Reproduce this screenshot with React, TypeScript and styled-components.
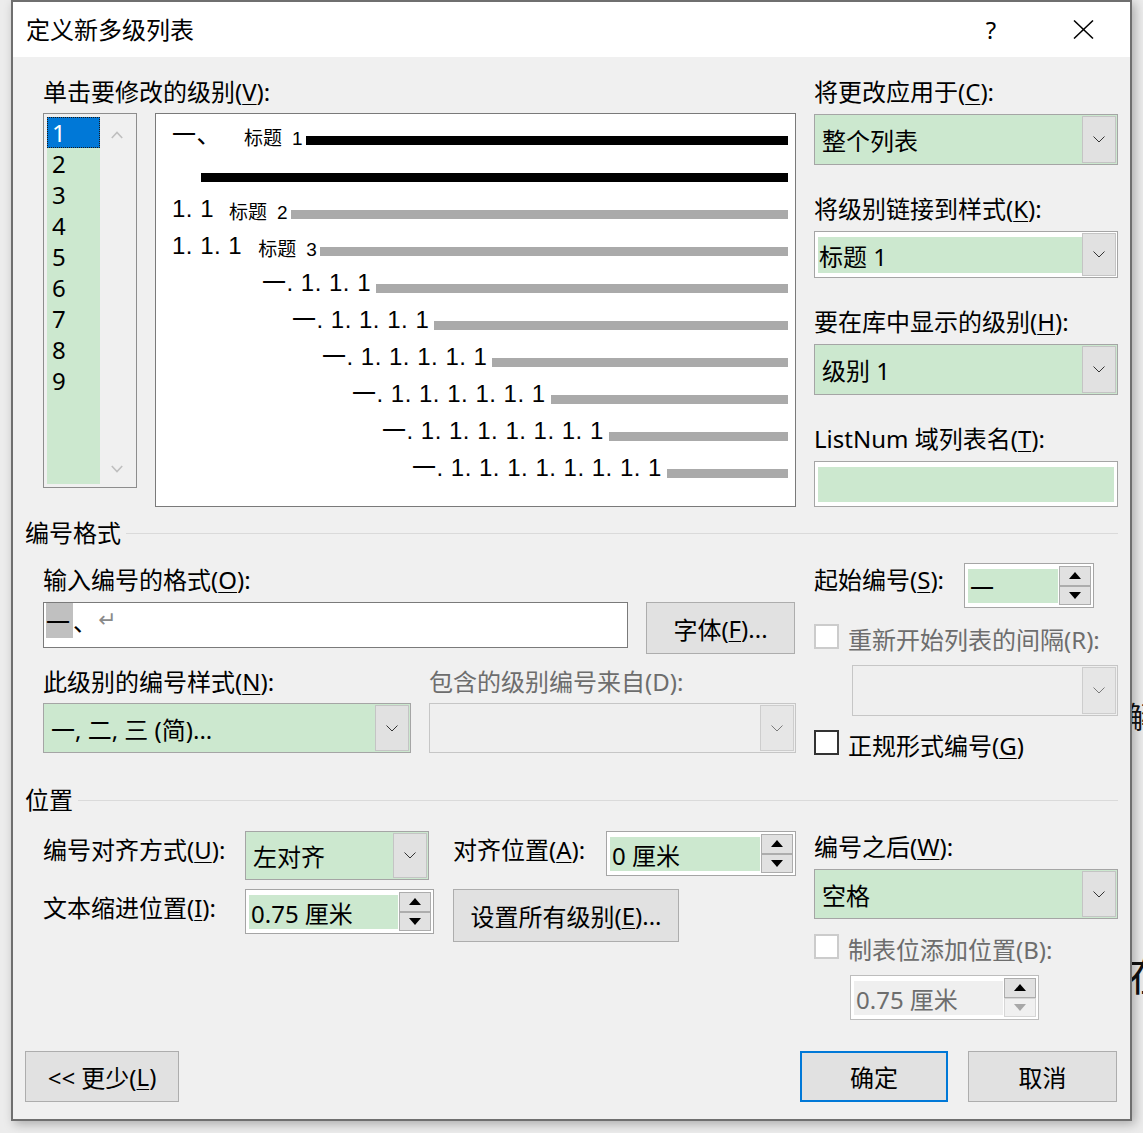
import React from 'react';
import styled, { createGlobalStyle } from 'styled-components';

const GREEN = '#cce8cf';
const UI_FONT = `"Noto Sans", "Noto Sans CJK SC", sans-serif`;

const Global = createGlobalStyle`
  html, body { margin: 0; padding: 0; }
  body {
    background: #ececec;
    font-family: ${UI_FONT};
    color: #000;
    overflow: hidden;
  }
`;

const Stage = styled.div`
  position: relative;
  width: 1143px;
  height: 1133px;
  box-sizing: border-box;
  padding-left: 11px;
  overflow: hidden;
  background: #ececec;
`;

const BackdropGlyph = styled.span<{ $x: number; $y: number; $size: number }>`
  position: absolute;
  left: ${(p) => p.$x}px;
  top: ${(p) => p.$y}px;
  font-size: ${(p) => p.$size}px;
  line-height: 1;
  font-family: "Noto Sans CJK SC", sans-serif;
  color: #111;
`;

const Dialog = styled.div`
  position: relative;
  z-index: 1;
  width: 1121px;
  height: 1121px;
  box-sizing: border-box;
  border: 2px solid #6f6f6f;
  background: #f0f0f0;
  display: flex;
  flex-direction: column;
  box-shadow: 3px 3px 10px rgba(0, 0, 0, 0.28);
`;

const TitleBar = styled.div`
  height: 55px;
  flex: none;
  background: #fff;
  display: flex;
  align-items: center;
  padding: 0 24px 0 13px;
`;

const TitleText = styled.div`
  flex: 1;
  font-size: 24px;
  line-height: 32px;
  margin-top: -2px;
  font-family: "Noto Sans CJK SC", sans-serif;
`;

const TitleBtn = styled.div<{ $ml?: number }>`
  width: 46px;
  height: 55px;
  margin-left: ${(p) => p.$ml ?? 0}px;
  display: flex;
  align-items: center;
  justify-content: center;
  font-size: 24px;
  font-family: "Noto Sans", sans-serif;
`;

const Body = styled.div`
  flex: 1;
  display: flex;
  flex-direction: column;
  padding: 19px 12px 17px 12px;
`;

const Label = styled.div<{ $disabled?: boolean; $w?: number; $mt?: number; $ml?: number }>`
  font-size: 24px;
  line-height: 32px;
  white-space: nowrap;
  color: ${(p) => (p.$disabled ? '#6d6d6d' : '#000')};
  ${(p) => (p.$w ? `width: ${p.$w}px; flex: none;` : '')}
  margin-top: ${(p) => p.$mt ?? 0}px;
  margin-left: ${(p) => p.$ml ?? 0}px;
`;

const Acc = styled.span`
  text-decoration: underline;
  text-decoration-thickness: 1px;
  text-underline-offset: 3px;
`;

const TopSection = styled.div`
  display: flex;
  gap: 18px;
  padding-left: 18px;
`;

const LeftTop = styled.div`
  width: 753px;
  display: flex;
  flex-direction: column;
  gap: 5px;
`;

const ListRow = styled.div`
  display: flex;
  gap: 18px;
  align-items: flex-start;
`;

const ListBox = styled.div`
  width: 94px;
  height: 375px;
  box-sizing: border-box;
  border: 1px solid #8d8d8d;
  padding: 3px;
  display: flex;
  background: #f0f0f0;
`;

const ItemsCol = styled.div`
  width: 53px;
  background: ${GREEN};
  display: flex;
  flex-direction: column;
`;

const ListItem = styled.div<{ $sel?: boolean }>`
  height: 31px;
  line-height: 31px;
  padding-left: 5px;
  font-size: 24px;
  background: ${(p) => (p.$sel ? '#0078d7' : 'transparent')};
  color: ${(p) => (p.$sel ? '#fff' : '#000')};
  ${(p) => (p.$sel ? 'outline: 1px dotted #1a1a1a; outline-offset: -1px;' : '')}
`;

const ScrollCol = styled.div`
  flex: 1;
  display: flex;
  flex-direction: column;
  justify-content: space-between;
  align-items: center;
  padding: 14px 0 11px;
`;

const Preview = styled.div`
  width: 641px;
  height: 394px;
  box-sizing: border-box;
  border: 1px solid #7a7a7a;
  background: #fff;
  padding: 5px 7px 0 16px;
  display: flex;
  flex-direction: column;
`;

const PreviewRow = styled.div<{ $indent: number }>`
  display: flex;
  align-items: flex-start;
  height: 37px;
  padding-left: ${(p) => p.$indent}px;
`;

const PNum = styled.span`
  font-family: "Liberation Sans", "Noto Sans CJK SC", sans-serif;
  font-size: 24px;
  line-height: 31px;
  white-space: pre;
  letter-spacing: 0.5px;
`;

const PHead = styled.span<{ $gap: number }>`
  margin-left: ${(p) => p.$gap}px;
  margin-top: 2px;
  font-family: "Noto Sans CJK SC", sans-serif;
  font-size: 19px;
  line-height: 31px;
  white-space: nowrap;
`;

const PHeadNum = styled.span`
  margin-left: 10px;
  font-family: "Liberation Sans", sans-serif;
`;

const PBar = styled.div<{ $dark: boolean; $ml: number }>`
  flex: 1;
  height: 9px;
  margin-top: 17px;
  margin-left: ${(p) => p.$ml}px;
  background: ${(p) => (p.$dark ? '#000' : '#aaaaaa')};
`;

const RightCol = styled.div`
  width: 304px;
  display: flex;
  flex-direction: column;
  gap: 28px;
`;

const Field = styled.div`
  display: flex;
  flex-direction: column;
  gap: 6px;
`;

type ComboVariant = 'green' | 'edit' | 'disabled';

const ComboBox = styled.div<{ $w: number; $h: number; $v: ComboVariant; $ml?: number }>`
  width: ${(p) => p.$w}px;
  height: ${(p) => p.$h}px;
  flex: none;
  box-sizing: border-box;
  margin-left: ${(p) => p.$ml ?? 0}px;
  display: flex;
  padding: 1px;
  border: 1px solid ${(p) => (p.$v === 'disabled' ? '#c6c6c6' : '#a5a5a5')};
  background: ${(p) => (p.$v === 'green' ? GREEN : p.$v === 'edit' ? '#fff' : '#efefef')};
`;

const ComboValue = styled.div<{ $v: ComboVariant }>`
  flex: 1;
  display: flex;
  align-items: center;
  font-size: 24px;
  white-space: nowrap;
  padding-left: ${(p) => (p.$v === 'edit' ? 1 : 6)}px;
  ${(p) => (p.$v === 'edit' ? `background: ${GREEN}; margin: 4px 0 3px 2px;` : '')}
`;

const DropBtn = styled.div<{ $disabled?: boolean }>`
  width: 34px;
  flex: none;
  box-sizing: border-box;
  border: 1px solid ${(p) => (p.$disabled ? '#cdcdcd' : '#c4c4c4')};
  background: ${(p) => (p.$disabled ? '#e6e6e6' : '#e1e1e1')};
  display: flex;
  align-items: center;
  justify-content: center;
`;

const TextField = styled.div`
  width: 304px;
  height: 46px;
  box-sizing: border-box;
  border: 1px solid #a5a5a5;
  background: #fff;
  padding: 5px 3px 4px 3px;
  display: flex;
`;

const GreenFill = styled.div`
  flex: 1;
  background: ${GREEN};
`;

const SectionHead = styled.div<{ $mt: number }>`
  display: flex;
  align-items: center;
  gap: 5px;
  margin-top: ${(p) => p.$mt}px;
  font-size: 24px;
  line-height: 32px;
`;

const Rule = styled.div`
  flex: 1;
  height: 1px;
  background: #dadada;
`;

const Section = styled.div<{ $mt: number }>`
  display: flex;
  align-items: flex-start;
  gap: 18px;
  padding-left: 18px;
  margin-top: ${(p) => p.$mt}px;
`;

const Column = styled.div<{ $w: number; $pt?: number; $gap?: number }>`
  width: ${(p) => p.$w}px;
  flex: none;
  display: flex;
  flex-direction: column;
  padding-top: ${(p) => p.$pt ?? 0}px;
  gap: ${(p) => p.$gap ?? 0}px;
`;

const Row = styled.div<{ $mt?: number; $gap?: number }>`
  display: flex;
  align-items: flex-start;
  margin-top: ${(p) => p.$mt ?? 0}px;
  gap: ${(p) => p.$gap ?? 0}px;
`;

const FormatInput = styled.div`
  width: 585px;
  height: 46px;
  flex: none;
  box-sizing: border-box;
  border: 1px solid #7a7a7a;
  background: #fff;
  padding: 0 0 0 2px;
  display: flex;
  align-items: flex-start;
  font-family: "Noto Sans CJK SC", sans-serif;
  font-size: 24px;
  line-height: 35px;
`;

const SelChar = styled.span`
  width: 27px;
  height: 35px;
  background: #c0c0c0;
`;

const RetMark = styled.span`
  margin-left: 1px;
  font-family: "DejaVu Sans", sans-serif;
  font-size: 22px;
  color: #8a8a8a;
  line-height: 33px;
`;

const Button = styled.div<{ $w: number; $h: number; $default?: boolean; $ml?: number }>`
  width: ${(p) => p.$w}px;
  height: ${(p) => p.$h}px;
  flex: none;
  margin-left: ${(p) => p.$ml ?? 0}px;
  box-sizing: border-box;
  background: #e1e1e1;
  border: ${(p) => (p.$default ? '2px solid #0078d7' : '1px solid #adadad')};
  display: flex;
  align-items: center;
  justify-content: center;
  font-size: 24px;
  white-space: nowrap;
`;

const Spinner = styled.div<{ $w: number; $h: number; $ml?: number; $disabled?: boolean }>`
  width: ${(p) => p.$w}px;
  height: ${(p) => p.$h}px;
  flex: none;
  margin-left: ${(p) => p.$ml ?? 0}px;
  box-sizing: border-box;
  border: 1px solid ${(p) => (p.$disabled ? '#bdbdbd' : '#a5a5a5')};
  background: #fff;
  padding: 2px;
  display: flex;
`;

const SpinValue = styled.div<{ $disabled?: boolean }>`
  flex: 1;
  margin: 3px 1px 2px 1px;
  padding-left: 2px;
  background: ${(p) => (p.$disabled ? '#efefef' : GREEN)};
  color: ${(p) => (p.$disabled ? '#6d6d6d' : '#000')};
  display: flex;
  align-items: center;
  font-size: 24px;
  white-space: nowrap;
`;

const SpinCol = styled.div`
  width: 32px;
  flex: none;
  display: flex;
  flex-direction: column;
`;

const SpinBtn = styled.div<{ $faded?: boolean }>`
  flex: 1;
  box-sizing: border-box;
  border: 1px solid ${(p) => (p.$faded ? '#d6d6d6' : '#adadad')};
  background: ${(p) => (p.$faded ? '#f0f0f0' : '#e1e1e1')};
  display: flex;
  align-items: center;
  justify-content: center;
`;

const CheckRow = styled.div<{ $mt: number }>`
  display: flex;
  align-items: flex-start;
  gap: 9px;
  margin-top: ${(p) => p.$mt}px;
`;

const CheckBox = styled.div<{ $disabled?: boolean }>`
  width: 25px;
  height: 25px;
  flex: none;
  box-sizing: border-box;
  background: #fff;
  border: 2px solid ${(p) => (p.$disabled ? '#cccccc' : '#333333')};
`;

const Footer = styled.div`
  margin-top: auto;
  display: flex;
  justify-content: space-between;
  align-items: flex-start;
`;

const FooterRight = styled.div`
  display: flex;
  gap: 20px;
  margin-right: 1px;
`;

const Chevron = ({ color = '#333' }: { color?: string }) => (
  <svg width="12" height="7" viewBox="0 0 12 7">
    <polyline points="0.5,0.5 6,6 11.5,0.5" fill="none" stroke={color} strokeWidth="1" />
  </svg>
);

const ScrollArrow = ({ up }: { up?: boolean }) => (
  <svg width="12" height="8" viewBox="0 0 12 8">
    <polyline
      points={up ? '0.8,7 6,1.5 11.2,7' : '0.8,1 6,6.5 11.2,1'}
      fill="none"
      stroke="#bfbfbf"
      strokeWidth="1.6"
    />
  </svg>
);

const Tri = ({ up, color = '#000' }: { up?: boolean; color?: string }) => (
  <svg width="12" height="7" viewBox="0 0 12 7">
    <polygon points={up ? '0,7 6,0 12,7' : '0,0 6,7 12,0'} fill={color} />
  </svg>
);

const CloseIcon = () => (
  <svg width="21" height="19" viewBox="0 0 21 19">
    <line x1="1" y1="0.5" x2="20" y2="18.5" stroke="#000" strokeWidth="1.5" />
    <line x1="20" y1="0.5" x2="1" y2="18.5" stroke="#000" strokeWidth="1.5" />
  </svg>
);

const Combo = ({
  w,
  h,
  v,
  ml,
  children,
}: {
  w: number;
  h: number;
  v: ComboVariant;
  ml?: number;
  children?: React.ReactNode;
}) => (
  <ComboBox $w={w} $h={h} $v={v} $ml={ml}>
    <ComboValue $v={v}>{children}</ComboValue>
    <DropBtn $disabled={v === 'disabled'}>
      <Chevron color={v === 'disabled' ? '#7a7a7a' : '#333'} />
    </DropBtn>
  </ComboBox>
);

const Spin = ({
  w,
  h,
  ml,
  disabled,
  children,
}: {
  w: number;
  h: number;
  ml?: number;
  disabled?: boolean;
  children: React.ReactNode;
}) => (
  <Spinner $w={w} $h={h} $ml={ml} $disabled={disabled}>
    <SpinValue $disabled={disabled}>{children}</SpinValue>
    <SpinCol>
      <SpinBtn $faded={false}>
        <Tri up />
      </SpinBtn>
      <SpinBtn $faded={disabled}>
        <Tri color={disabled ? '#a8a8a8' : '#000'} />
      </SpinBtn>
    </SpinCol>
  </Spinner>
);

type PRow = { indent: number; num: string; head?: string; headNum?: string; gap?: number; dark?: boolean; barMl: number };

const previewRows: PRow[] = [
  { indent: 0, num: '一、', head: '标题', headNum: '1', gap: 23, dark: true, barMl: 3 },
  { indent: 29, num: '', dark: true, barMl: 0 },
  { indent: 0, num: '1. 1', head: '标题', headNum: '2', gap: 15, barMl: 3 },
  { indent: 0, num: '1. 1. 1', head: '标题', headNum: '3', gap: 16, barMl: 3 },
  { indent: 90, num: '一. 1. 1. 1', barMl: 5 },
  { indent: 120, num: '一. 1. 1. 1. 1', barMl: 5 },
  { indent: 150, num: '一. 1. 1. 1. 1. 1', barMl: 5 },
  { indent: 180, num: '一. 1. 1. 1. 1. 1. 1', barMl: 5 },
  { indent: 210, num: '一. 1. 1. 1. 1. 1. 1. 1', barMl: 5 },
  { indent: 240, num: '一. 1. 1. 1. 1. 1. 1. 1. 1', barMl: 5 },
];

export default function App() {
  return (
    <>
      <Global />
      <Stage>
        <BackdropGlyph $x={1127} $y={700} $size={30}>解</BackdropGlyph>
        <BackdropGlyph $x={1128} $y={952} $size={42}>在</BackdropGlyph>
        <Dialog>
          <TitleBar>
            <TitleText>定义新多级列表</TitleText>
            <TitleBtn>?</TitleBtn>
            <TitleBtn $ml={46}>
              <CloseIcon />
            </TitleBtn>
          </TitleBar>
          <Body>
            <TopSection>
              <LeftTop>
                <Label>
                  单击要修改的级别(<Acc>V</Acc>):
                </Label>
                <ListRow>
                  <ListBox>
                    <ItemsCol>
                      {[1, 2, 3, 4, 5, 6, 7, 8, 9].map((n) => (
                        <ListItem key={n} $sel={n === 1}>
                          {n}
                        </ListItem>
                      ))}
                    </ItemsCol>
                    <ScrollCol>
                      <ScrollArrow up />
                      <ScrollArrow />
                    </ScrollCol>
                  </ListBox>
                  <Preview>
                    {previewRows.map((r, i) => (
                      <PreviewRow key={i} $indent={r.indent}>
                        {r.num && <PNum>{r.num}</PNum>}
                        {r.head && (
                          <PHead $gap={r.gap ?? 0}>
                            {r.head}
                            <PHeadNum>{r.headNum}</PHeadNum>
                          </PHead>
                        )}
                        <PBar $dark={!!r.dark} $ml={r.barMl} />
                      </PreviewRow>
                    ))}
                  </Preview>
                </ListRow>
              </LeftTop>
              <RightCol>
                <Field>
                  <Label>
                    将更改应用于(<Acc>C</Acc>):
                  </Label>
                  <Combo w={304} h={51} v="green">
                    整个列表
                  </Combo>
                </Field>
                <Field>
                  <Label>
                    将级别链接到样式(<Acc>K</Acc>):
                  </Label>
                  <Combo w={304} h={47} v="edit">
                    标题 1
                  </Combo>
                </Field>
                <Field>
                  <Label>
                    要在库中显示的级别(<Acc>H</Acc>):
                  </Label>
                  <Combo w={304} h={51} v="green">
                    级别 1
                  </Combo>
                </Field>
                <Field>
                  <Label>
                    ListNum 域列表名(<Acc>T</Acc>):
                  </Label>
                  <TextField>
                    <GreenFill />
                  </TextField>
                </Field>
              </RightCol>
            </TopSection>

            <SectionHead $mt={10}>
              编号格式
              <Rule />
            </SectionHead>

            <Section $mt={14}>
              <Column $w={753} $pt={1}>
                <Label>
                  输入编号的格式(<Acc>O</Acc>):
                </Label>
                <Row $mt={6} $gap={18}>
                  <FormatInput>
                    <SelChar>一</SelChar>
                    <span>、</span>
                    <RetMark>↵</RetMark>
                  </FormatInput>
                  <Button $w={149} $h={52}>
                    字体(<Acc>F</Acc>)...
                  </Button>
                </Row>
                <Row $mt={12} $gap={18}>
                  <Column $w={368} $gap={5}>
                    <Label>
                      此级别的编号样式(<Acc>N</Acc>):
                    </Label>
                    <Combo w={368} h={50} v="green">
                      一, 二, 三 (简)...
                    </Combo>
                  </Column>
                  <Column $w={367} $gap={5}>
                    <Label $disabled>包含的级别编号来自(D):</Label>
                    <Combo w={367} h={50} v="disabled" />
                  </Column>
                </Row>
              </Column>
              <Column $w={304}>
                <Row>
                  <Label $w={150} $mt={1}>
                    起始编号(<Acc>S</Acc>):
                  </Label>
                  <Spin w={130} h={45}>
                    一
                  </Spin>
                </Row>
                <CheckRow $mt={16}>
                  <CheckBox $disabled />
                  <Label $disabled>重新开始列表的间隔(R):</Label>
                </CheckRow>
                <Row $mt={9}>
                  <Combo w={266} h={51} v="disabled" ml={38} />
                </Row>
                <CheckRow $mt={14}>
                  <CheckBox />
                  <Label>
                    正规形式编号(<Acc>G</Acc>)
                  </Label>
                </CheckRow>
              </Column>
            </Section>

            <SectionHead $mt={22}>
              位置
              <Rule />
            </SectionHead>

            <Section $mt={15}>
              <Column $w={753} $gap={9}>
                <Row>
                  <Label $w={202} $mt={3}>
                    编号对齐方式(<Acc>U</Acc>):
                  </Label>
                  <Combo w={184} h={49} v="green">
                    左对齐
                  </Combo>
                  <Label $w={153} $mt={3} $ml={24}>
                    对齐位置(<Acc>A</Acc>):
                  </Label>
                  <Spin w={190} h={45}>
                    0 厘米
                  </Spin>
                </Row>
                <Row>
                  <Label $w={202} $mt={3}>
                    文本缩进位置(<Acc>I</Acc>):
                  </Label>
                  <Spin w={189} h={45}>
                    0.75 厘米
                  </Spin>
                  <Button $w={226} $h={53} $ml={19}>
                    设置所有级别(<Acc>E</Acc>)...
                  </Button>
                </Row>
              </Column>
              <Column $w={304}>
                <Label>
                  编号之后(<Acc>W</Acc>):
                </Label>
                <Row $mt={6}>
                  <Combo w={304} h={50} v="green">
                    空格
                  </Combo>
                </Row>
                <CheckRow $mt={15}>
                  <CheckBox $disabled />
                  <Label $disabled>制表位添加位置(B):</Label>
                </CheckRow>
                <Row $mt={9}>
                  <Spin w={189} h={45} ml={36} disabled>
                    0.75 厘米
                  </Spin>
                </Row>
              </Column>
            </Section>

            <Footer>
              <Button $w={154} $h={51}>
                {'<< '}更少(<Acc>L</Acc>)
              </Button>
              <FooterRight>
                <Button $w={148} $h={51} $default>
                  确定
                </Button>
                <Button $w={149} $h={51}>
                  取消
                </Button>
              </FooterRight>
            </Footer>
          </Body>
        </Dialog>
      </Stage>
    </>
  );
}
